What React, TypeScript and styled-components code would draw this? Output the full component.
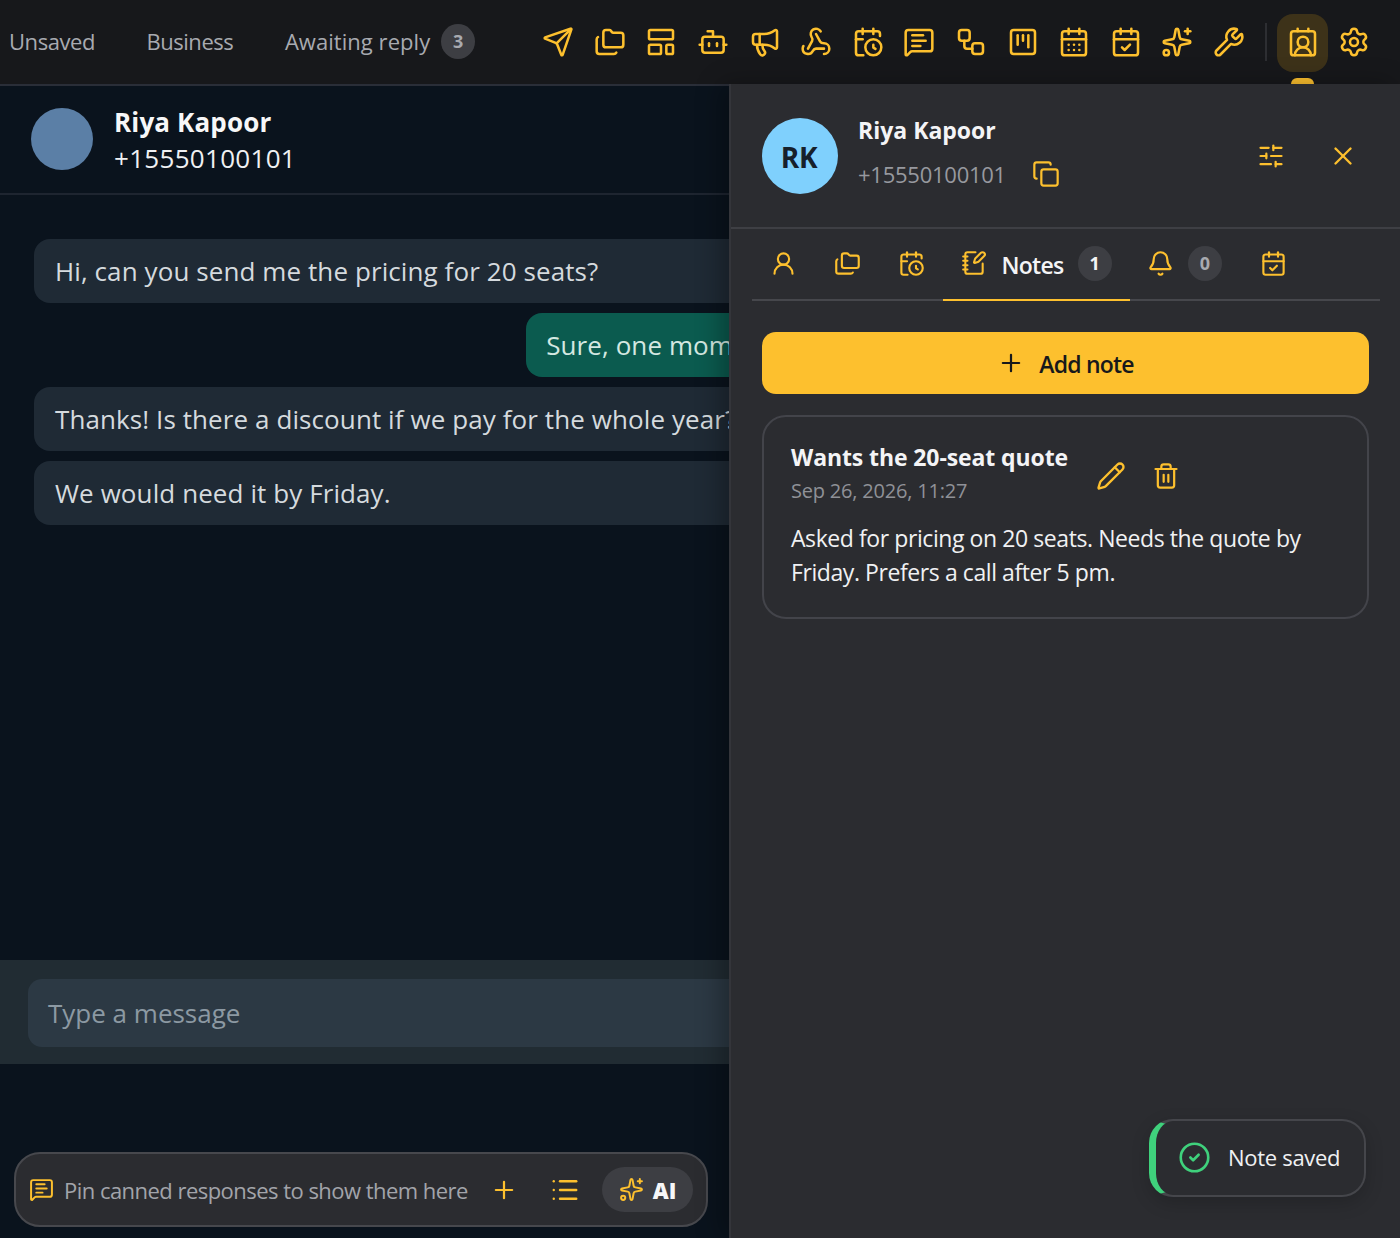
import React from "react";
import styled, { createGlobalStyle } from "styled-components";
import {
  Bell,
  Bot,
  CalendarCheck,
  CalendarClock,
  CalendarDays,
  CircleCheck,
  ContactRound,
  Copy,
  Folders,
  LayoutTemplate,
  List,
  Megaphone,
  MessageSquareText,
  NotebookPen,
  Pencil,
  Plus,
  Send,
  Settings,
  SlidersHorizontal,
  Sparkles,
  SquareKanban,
  Trash2,
  UserRound,
  Webhook,
  Workflow,
  Wrench,
  X,
} from "lucide-react";

const yellow = "#fdc02e";
const font = `"Open Sans", "Noto Sans", "Liberation Sans", sans-serif`;

const GlobalStyle = createGlobalStyle`
  html, body {
    margin: 0;
    padding: 0;
    height: 100%;
    background: #0a131d;
    font-family: ${font};
    overflow: hidden;
  }
  * { box-sizing: border-box; }
`;

const Page = styled.div`
  position: relative;
  width: 1400px;
  height: 1238px;
  display: flex;
  flex-direction: column;
  overflow: hidden;
`;

const TopBar = styled.header`
  height: 86px;
  flex-shrink: 0;
  display: flex;
  align-items: center;
  background: #17181b;
  border-bottom: 2px solid #2a2e38;
`;

const TopTabs = styled.nav`
  width: 532.4px;
  padding: 0 0 2px 9px;
  display: flex;
  align-items: center;
  gap: 51.5px;
`;

const TopTab = styled.span<{ $wide?: boolean }>`
  display: flex;
  align-items: center;
  gap: 11px;
  font-size: 22px;
  letter-spacing: ${(p) => (p.$wide ? "0.05px" : "-0.45px")};
  font-weight: 500;
  color: #a8aab0;
`;

const Count = styled.span<{ $muted?: boolean }>`
  width: 34px;
  height: 35px;
  border-radius: 50%;
  display: inline-flex;
  align-items: center;
  justify-content: center;
  background: #3d3e43;
  color: ${(p) => (p.$muted ? "#a8aab0" : "#f4f4f6")};
  font-size: 18px;
  font-weight: 700;
  letter-spacing: 0;
`;

const ToolRow = styled.div`
  display: flex;
  align-items: center;
  color: ${yellow};
`;

const ToolIcon = styled.span<{ $active?: boolean }>`
  position: relative;
  width: 51.6px;
  height: 58px;
  margin-top: 2px;
  padding-bottom: 2px;
  display: flex;
  align-items: center;
  justify-content: center;
  border-radius: 16px;
  background: ${(p) => (p.$active ? "#3d3219" : "transparent")};
`;

const ActiveMark = styled.span`
  position: absolute;
  left: 14px;
  top: 64px;
  width: 23px;
  height: 6px;
  border-radius: 6px 6px 0 0;
  background: ${yellow};
`;

const ToolDivider = styled.span`
  width: 2px;
  height: 38px;
  margin: 0 10px 0 10px;
  background: #2d2e32;
`;

const Body = styled.div`
  flex: 1;
  min-height: 0;
  display: flex;
`;

const ChatPane = styled.section`
  width: 729px;
  flex-shrink: 0;
  display: flex;
  flex-direction: column;
  overflow: hidden;
  background: #0a131d;
`;

const ChatHeader = styled.div`
  height: 109px;
  flex-shrink: 0;
  display: flex;
  align-items: center;
  gap: 21px;
  padding: 0 0 2px 31px;
  border-bottom: 2px solid #1e2530;
`;

const ChatAvatar = styled.div`
  width: 62px;
  height: 62px;
  border-radius: 50%;
  background: #5b7fa6;
`;

const ChatMeta = styled.div`
  padding-top: 2px;
`;

const ChatName = styled.div`
  font-size: 26px;
  line-height: 36px;
  font-weight: 700;
  letter-spacing: 0.15px;
  color: #f7f7f8;
`;

const ChatPhone = styled.div`
  font-size: 26px;
  line-height: 36px;
  letter-spacing: 0.3px;
  color: #f0f1f3;
`;

const Messages = styled.div`
  flex: 1;
  width: 800px;
  padding: 44px 0 0 34px;
  display: flex;
  flex-direction: column;
  gap: 10px;
`;

const Bubble = styled.div<{ $sent?: boolean }>`
  align-self: ${(p) => (p.$sent ? "flex-end" : "stretch")};
  height: 64px;
  padding: 0 20px 0 ${(p) => (p.$sent ? 20 : 21)}px;
  display: flex;
  align-items: center;
  border-radius: 16px;
  white-space: nowrap;
  font-size: 26px;
  letter-spacing: 0.09px;
  color: ${(p) => (p.$sent ? "#d4e8e1" : "#d5dade")};
  background: ${(p) => (p.$sent ? "#0b5b4f" : "#1f2a35")};
`;

const Composer = styled.div`
  height: 104px;
  flex-shrink: 0;
  width: 790px;
  padding: 19px 0 0 28px;
  background: #212c33;
`;

const ComposerInput = styled.div`
  height: 68px;
  display: flex;
  align-items: center;
  padding-left: 20px;
  border-radius: 14px;
  background: #2c3944;
  font-size: 26px;
  color: #8c99a3;
`;

const CannedArea = styled.div`
  height: 174px;
  flex-shrink: 0;
  padding: 88px 21px 0 14px;
`;

const CannedBar = styled.div`
  height: 75px;
  display: flex;
  align-items: center;
  padding: 0 13px 0 13px;
  border-radius: 26px;
  border: 2px solid #47484d;
  background: #2b2c30;
  color: ${yellow};
`;

const CannedText = styled.span`
  margin-left: 10px;
  width: 426px;
  white-space: nowrap;
  font-size: 22px;
  letter-spacing: -0.53px;
  color: #a2a4aa;
`;

const CannedList = styled.span`
  display: flex;
  margin-left: 32px;
  margin-right: 22px;
`;

const AiPill = styled.span`
  width: 91px;
  height: 45px;
  display: flex;
  align-items: center;
  justify-content: center;
  gap: 9px;
  border-radius: 23px;
  background: #3d3e43;
  color: #f7f7f8;
  font-size: 22px;
  font-weight: 800;
`;

const AiIcon = styled.span`
  display: flex;
  color: ${yellow};
`;

const SidePanel = styled.aside`
  flex: 1;
  min-width: 0;
  position: relative;
  margin-top: -2px;
  display: flex;
  flex-direction: column;
  background: #2b2c30;
  border-left: 2px solid #34353a;
  box-shadow: -8px 0 24px rgba(0, 0, 0, 0.3);
`;

const ProfileHeader = styled.div`
  height: 145px;
  flex-shrink: 0;
  display: flex;
  align-items: center;
  padding: 0 42px 0 31px;
  border-bottom: 2px solid #3e3f44;
`;

const ProfileAvatar = styled.div`
  width: 76px;
  height: 76px;
  flex-shrink: 0;
  padding: 2px 2px 0 0;
  border-radius: 50%;
  display: flex;
  align-items: center;
  justify-content: center;
  background: #7fd0fd;
  color: #16202b;
  font-size: 28px;
  font-weight: 700;
  letter-spacing: -0.3px;
`;

const ProfileInfo = styled.div`
  margin-left: 20px;
  padding-bottom: 8px;
  flex: 1;
`;

const ProfileName = styled.div`
  font-size: 23px;
  line-height: 32px;
  font-weight: 700;
  color: #f4f4f6;
`;

const ProfilePhoneRow = styled.div`
  margin-top: 13px;
  display: flex;
  align-items: center;
  gap: 26px;
  color: ${yellow};
`;

const ProfilePhone = styled.span`
  font-size: 22px;
  letter-spacing: -0.25px;
  color: #97999f;
`;

const HeaderActions = styled.div`
  display: flex;
  align-items: center;
  gap: 43px;
  color: ${yellow};
`;

const TabStrip = styled.div`
  margin: 0 20px 0 21px;
  height: 72px;
  flex-shrink: 0;
  display: flex;
  align-items: stretch;
  border-bottom: 2px solid #46474c;
  color: ${yellow};
`;

const PanelTab = styled.div<{ $active?: boolean; $width: number }>`
  width: ${(p) => p.$width}px;
  margin-bottom: -2px;
  display: flex;
  align-items: center;
  justify-content: center;
  gap: 14px;
  padding-bottom: 2px;
  border-bottom: 2px solid ${(p) => (p.$active ? yellow : "transparent")};
`;

const TabLabel = styled.span`
  padding-top: 3px;
  font-size: 23px;
  font-weight: 600;
  letter-spacing: -0.7px;
  color: #f4f4f6;
`;

const PanelBody = styled.div`
  padding: 31px 31px 0 31px;
`;

const AddButton = styled.div`
  height: 62px;
  display: flex;
  align-items: center;
  justify-content: center;
  gap: 14px;
  border-radius: 14px;
  background: ${yellow};
  color: #17181b;
  font-size: 23px;
  font-weight: 600;
  letter-spacing: -0.8px;
`;

const AddLabel = styled.span`
  padding-top: 2px;
`;

const NoteCard = styled.article`
  margin-top: 21px;
  height: 204px;
  padding: 24px 27px 0;
  border-radius: 24px;
  border: 2px solid #43444a;
`;

const NoteTop = styled.div`
  display: flex;
  align-items: center;
  gap: 28px;
  color: ${yellow};
`;

const NoteTitle = styled.div`
  font-size: 23px;
  line-height: 32px;
  font-weight: 700;
  letter-spacing: -0.1px;
  color: #f4f4f6;
`;

const NoteDate = styled.div`
  margin-top: 3px;
  font-size: 20px;
  line-height: 29px;
  letter-spacing: -0.2px;
  color: #8f9197;
`;

const NoteActions = styled.div`
  padding-top: 6px;
  display: flex;
  align-items: center;
  gap: 26px;
`;

const NoteText = styled.p`
  margin: 16px 0 0;
  font-size: 23px;
  line-height: 34px;
  letter-spacing: -0.42px;
  color: #f0f1f3;
`;

const Toast = styled.div`
  position: absolute;
  left: 1149px;
  top: 1119px;
  width: 217px;
  height: 78px;
  display: flex;
  align-items: center;
  gap: 17px;
  padding: 0 0 1px 22px;
  border-radius: 24px;
  border: 2px solid #45464b;
  border-left: 7px solid #3fd17c;
  background: #2b2c30;
  box-shadow: 0 6px 18px rgba(0, 0, 0, 0.18);
  color: #3fd17c;
  font-size: 22px;
`;

const ToastText = styled.span`
  padding-bottom: 2px;
  color: #f0f1f3;
  letter-spacing: -0.3px;
`;

const tool = 32;
const line = 1.9;

function App() {
  return (
    <Page>
      <GlobalStyle />
      <TopBar>
        <TopTabs>
          <TopTab>Unsaved</TopTab>
          <TopTab>Business</TopTab>
          <TopTab $wide>
            Awaiting reply <Count $muted>3</Count>
          </TopTab>
        </TopTabs>
        <ToolRow>
          <ToolIcon><Send size={tool} strokeWidth={line} /></ToolIcon>
          <ToolIcon><Folders size={tool} strokeWidth={line} /></ToolIcon>
          <ToolIcon><LayoutTemplate size={tool} strokeWidth={line} /></ToolIcon>
          <ToolIcon><Bot size={tool} strokeWidth={line} /></ToolIcon>
          <ToolIcon><Megaphone size={tool} strokeWidth={line} /></ToolIcon>
          <ToolIcon><Webhook size={tool} strokeWidth={line} /></ToolIcon>
          <ToolIcon><CalendarClock size={tool} strokeWidth={line} /></ToolIcon>
          <ToolIcon><MessageSquareText size={tool} strokeWidth={line} /></ToolIcon>
          <ToolIcon><Workflow size={tool} strokeWidth={line} /></ToolIcon>
          <ToolIcon><SquareKanban size={tool} strokeWidth={line} /></ToolIcon>
          <ToolIcon><CalendarDays size={tool} strokeWidth={line} /></ToolIcon>
          <ToolIcon><CalendarCheck size={tool} strokeWidth={line} /></ToolIcon>
          <ToolIcon><Sparkles size={tool} strokeWidth={line} /></ToolIcon>
          <ToolIcon><Wrench size={tool} strokeWidth={line} /></ToolIcon>
          <ToolDivider />
          <ToolIcon $active>
            <ContactRound size={tool} strokeWidth={line} />
            <ActiveMark />
          </ToolIcon>
          <ToolIcon><Settings size={tool} strokeWidth={line} /></ToolIcon>
        </ToolRow>
      </TopBar>
      <Body>
        <ChatPane>
          <ChatHeader>
            <ChatAvatar />
            <ChatMeta>
              <ChatName>Riya Kapoor</ChatName>
              <ChatPhone>+15550100101</ChatPhone>
            </ChatMeta>
          </ChatHeader>
          <Messages>
            <Bubble>Hi, can you send me the pricing for 20 seats?</Bubble>
            <Bubble $sent>Sure, one moment.</Bubble>
            <Bubble>Thanks! Is there a discount if we pay for the whole year?</Bubble>
            <Bubble>We would need it by Friday.</Bubble>
          </Messages>
          <Composer>
            <ComposerInput>Type a message</ComposerInput>
          </Composer>
          <CannedArea>
            <CannedBar>
              <MessageSquareText size={25} strokeWidth={line} />
              <CannedText>Pin canned responses to show them here</CannedText>
              <Plus size={28} strokeWidth={line} />
              <CannedList><List size={30} strokeWidth={line} /></CannedList>
              <AiPill>
                <AiIcon><Sparkles size={25} strokeWidth={line} /></AiIcon>
                AI
              </AiPill>
            </CannedBar>
          </CannedArea>
        </ChatPane>
        <SidePanel>
          <ProfileHeader>
            <ProfileAvatar>RK</ProfileAvatar>
            <ProfileInfo>
              <ProfileName>Riya Kapoor</ProfileName>
              <ProfilePhoneRow>
                <ProfilePhone>+15550100101</ProfilePhone>
                <Copy size={28} strokeWidth={line} />
              </ProfilePhoneRow>
            </ProfileInfo>
            <HeaderActions>
              <SlidersHorizontal size={28} strokeWidth={line} />
              <X size={30} strokeWidth={line} />
            </HeaderActions>
          </ProfileHeader>
          <TabStrip>
            <PanelTab $width={63}><UserRound size={27} strokeWidth={line} /></PanelTab>
            <PanelTab $width={64}><Folders size={27} strokeWidth={line} /></PanelTab>
            <PanelTab $width={64}><CalendarClock size={27} strokeWidth={line} /></PanelTab>
            <PanelTab $active $width={187}>
              <NotebookPen size={26} strokeWidth={line} />
              <TabLabel>Notes</TabLabel>
              <Count>1</Count>
            </PanelTab>
            <PanelTab $width={109}>
              <Bell size={27} strokeWidth={line} />
              <Count $muted>0</Count>
            </PanelTab>
            <PanelTab $width={68}><CalendarCheck size={27} strokeWidth={line} /></PanelTab>
          </TabStrip>
          <PanelBody>
            <AddButton>
              <Plus size={28} strokeWidth={line} />
              <AddLabel>Add note</AddLabel>
            </AddButton>
            <NoteCard>
              <NoteTop>
                <div>
                  <NoteTitle>Wants the 20-seat quote</NoteTitle>
                  <NoteDate>Sep 26, 2026, 11:27</NoteDate>
                </div>
                <NoteActions>
                  <Pencil size={30} strokeWidth={line} />
                  <Trash2 size={28} strokeWidth={line} />
                </NoteActions>
              </NoteTop>
              <NoteText>
                Asked for pricing on 20 seats. Needs the quote by Friday. Prefers a call after 5 pm.
              </NoteText>
            </NoteCard>
          </PanelBody>
        </SidePanel>
      </Body>
      <Toast>
        <CircleCheck size={33} strokeWidth={line} />
        <ToastText>Note saved</ToastText>
      </Toast>
    </Page>
  );
}

export default App;
